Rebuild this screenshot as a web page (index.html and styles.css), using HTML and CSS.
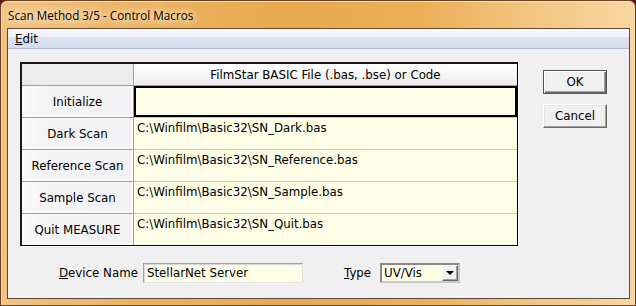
FILE: index.html
```html
<!DOCTYPE html>
<html lang="en">

<head>
    <meta charset="UTF-8">
    <meta name="viewport" content="width=device-width, initial-scale=1.0">
    <title>Scan Method 3/5 - Control Macros</title>
    <link rel="stylesheet" href="styles.css">
</head>

<body>
    <div class="window">
        <div class="titlebar">
            <span class="title">Scan Method 3/5 - Control Macros</span>
        </div>

        <div class="client">
            <div class="menubar">
                <span class="menu-item"><u>E</u>dit</span>
            </div>

            <div class="content">
                <div class="top">
                    <div class="grid">
                        <div class="corner"></div>
                        <div class="col-head">FilmStar BASIC File (.bas, .bse) or Code</div>

                        <div class="row-head">Initialize</div>
                        <div class="cell focused"></div>

                        <div class="row-head">Dark Scan</div>
                        <div class="cell">C:\Winfilm\Basic32\SN_Dark.bas</div>

                        <div class="row-head">Reference Scan</div>
                        <div class="cell">C:\Winfilm\Basic32\SN_Reference.bas</div>

                        <div class="row-head">Sample Scan</div>
                        <div class="cell">C:\Winfilm\Basic32\SN_Sample.bas</div>

                        <div class="row-head last">Quit MEASURE</div>
                        <div class="cell last">C:\Winfilm\Basic32\SN_Quit.bas</div>
                    </div>

                    <div class="buttons">
                        <button class="btn default">OK</button>
                        <button class="btn">Cancel</button>
                    </div>
                </div>

                <div class="fields">
                    <span class="label device-label"><u>D</u>evice Name</span>
                    <input class="textbox" type="text" value="StellarNet Server">
                    <span class="label type-label"><u>T</u>ype</span>
                    <div class="select">
                        <span>UV/Vis</span>
                        <span class="drop-btn"><span class="arrow"></span></span>
                    </div>
                </div>
            </div>
        </div>
    </div>
</body>

</html>
```

FILE: styles.css
```css
* {
    margin: 0;
    padding: 0;
    box-sizing: border-box;
}

body {
    width: 636px;
    height: 306px;
    overflow: hidden;
    background-color: #5a1812;
    font-family: "DejaVu Sans", sans-serif;
    font-size: 11.8px;
    color: #000;
}

.window {
    height: 306px;
    display: flex;
    flex-direction: column;

    padding: 0 5px 6px 6px;
    border: 1px solid #6b4520;
    border-radius: 7px 7px 0 0;
    background: linear-gradient(to right, #f2c383 0%, #edb464 18%, #e8a94f 45%, #ebae56 65%, #f2c47f 83%, #f8d7a3 100%);
    box-shadow: inset 0 1px 0 #fbe3bd, inset 1px 0 0 #f7d3a0;
}

.titlebar {
    height: 27px;
    display: flex;
    align-items: center;
    padding-left: 1px;
}

.title {
    font-family: "Open Sans", sans-serif;
    font-size: 11.7px;
    color: #000;
    text-shadow: 0 0 6px #fdf0dc, 0 0 10px #fdf0dc, 0 0 14px #fbe7c8;
}

.client {
    flex: 1;
    display: flex;
    flex-direction: column;
    border: 1px solid #5e4a34;
    background-color: #f0f0f0;
}

.menubar {
    height: 20px;
    display: flex;
    align-items: center;
    padding-left: 7px;
    border-bottom: 1px solid #b4bcd2;
    background: linear-gradient(#f8f9fc, #eef1f8 40%, #dde2f1 45%, #d5dbee);
}

.content {
    padding: 13px 0 0 12px;
}

.top {
    display: flex;
    align-items: flex-start;
}

.grid {
    display: grid;
    grid-template-columns: 112px 383px;
    grid-template-rows: 22px repeat(4, 32px) 31px;

    border-style: solid;
    border-width: 2px 1px 1px 2px;
    border-color: #1a1a1a #000 #000 #1a1a1a;
    box-shadow: 1px 1px 0 #fff;
}

.corner {
    background-color: #ececec;
    border-right: 1px solid #a0a0a0;
    border-bottom: 1px solid #a0a0a0;
}

.col-head {
    display: flex;
    align-items: center;
    justify-content: center;
    border-bottom: 1px solid #a0a0a0;
    background: linear-gradient(#ffffff, #f4f4f4 60%, #ececec);
    box-shadow: inset 1px 1px 0 #fff;
}

.row-head {
    display: flex;
    align-items: center;
    justify-content: center;
    border-right: 1px solid #a0a0a0;
    border-bottom: 1px solid #a0a0a0;
    background: linear-gradient(to right, #fbfbfb, #f4f4f6 20%, #f2f2f4);
    box-shadow: inset -2px -2px 0 #fbfbfb;
}

.cell {
    padding: 3px 0 0 3px;
    border-bottom: 1px solid #c8c8c8;
    background-color: #fffee7;
    white-space: nowrap;
}

.cell.focused {
    box-shadow: inset 0 0 0 2px #000;
}

.row-head.last,
.cell.last {
    border-bottom: none;
}

.buttons {
    display: flex;
    flex-direction: column;
    gap: 10px;
    margin-left: 25px;
    padding-top: 8px;
}

.btn {
    width: 64px;
    height: 24px;
    font: inherit;
    color: #000;
    background-color: #f0f0f0;
    border: 1px solid;
    border-color: #fff #696969 #696969 #fff;
    box-shadow: inset -1px -1px 0 #a0a0a0, inset 1px 1px 0 #e3e3e3;
}

.btn.default {
    border-color: #555;
    box-shadow: inset 1px 1px 0 #fff, inset -1px -1px 0 #696969, inset -2px -2px 0 #a0a0a0;
}

.fields {
    display: flex;
    align-items: center;
    margin-top: 17px;
    padding-left: 39px;
}

.label {
    white-space: nowrap;
}

.device-label {
    width: 84px;
}

.textbox {
    width: 160px;
    height: 20px;
    padding: 0 3px;
    font: inherit;
    color: #000;
    background-color: #fffee7;
    border: 1px solid;
    border-color: #a0a0a0 #e3e3e3 #e3e3e3 #a0a0a0;
    box-shadow: inset 1px 1px 0 #d8d8d8;
    outline: none;
}

.type-label {
    width: 36px;
    margin-left: 41px;
}

.select {
    width: 80px;
    height: 20px;
    display: flex;
    align-items: center;
    justify-content: space-between;
    padding-left: 2px;
    background-color: #fffee7;
    border: 2px solid;
    border-color: #8a8a8a #c8c8c8 #c8c8c8 #8a8a8a;
}

.drop-btn {
    width: 16px;
    height: 16px;
    display: flex;
    align-items: center;
    justify-content: center;
    background-color: #f0f0f0;
    border: 1px solid;
    border-color: #f8f8f8 #696969 #696969 #f8f8f8;
    box-shadow: inset -1px -1px 0 #a0a0a0;
}

.arrow {
    width: 0;
    height: 0;
    border-left: 4px solid transparent;
    border-right: 4px solid transparent;
    border-top: 4px solid #000;
}
```
